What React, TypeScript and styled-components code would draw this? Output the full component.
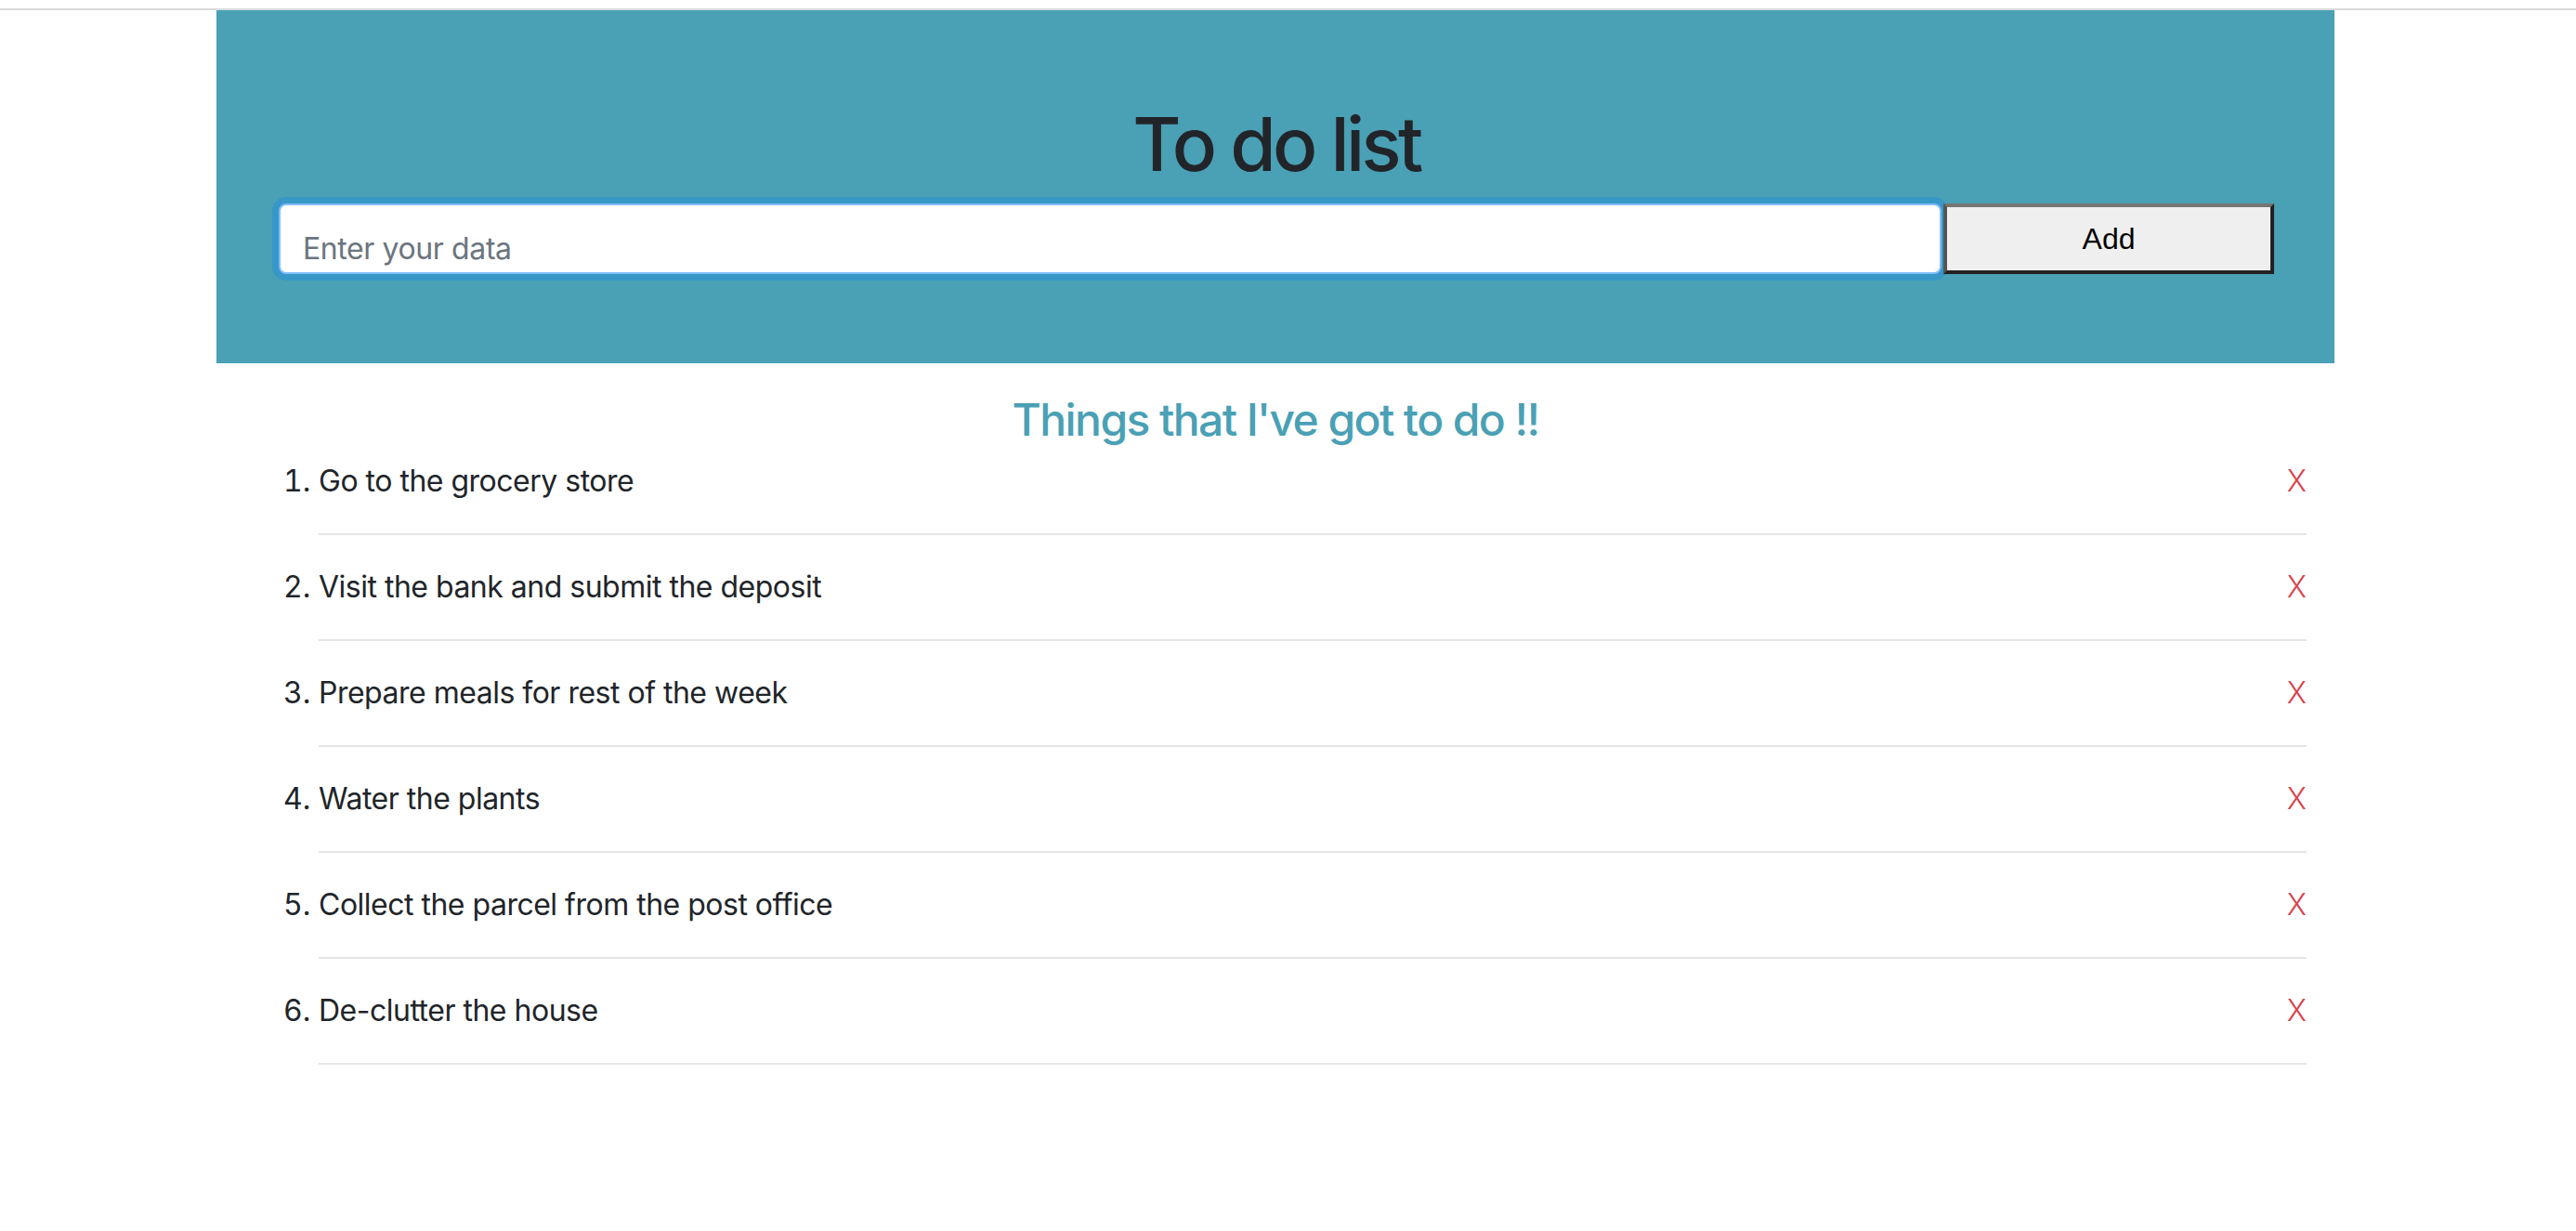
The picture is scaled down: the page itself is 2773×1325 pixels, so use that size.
import React from "react";
import styled, { createGlobalStyle } from "styled-components";

const GlobalStyle = createGlobalStyle`
  html, body {
    margin: 0;
    padding: 0;
    background: #ffffff;
  }
  body {
    font-family: Inter, "Noto Sans", "Liberation Sans", sans-serif;
    color: #212529;
  }
`;

const Page = styled.div`
  padding-top: 9px;
  padding-right: 27px;
`;

const TopRule = styled.div`
  height: 2px;
  background: #dadadd;
  margin-right: -27px;
`;

const Container = styled.div`
  width: 2280px;
  margin: 0 auto;
`;

const Banner = styled.header`
  background: #4aa0b5;
  padding: 96px 65px 96px 67px;
  display: flex;
  flex-direction: column;
  align-items: stretch;
`;

const Title = styled.h1`
  margin: 0 0 16px;
  font-size: 80px;
  line-height: 96px;
  font-weight: 500;
  text-align: center;
  color: #212529;
  letter-spacing: -3.6px;
`;

const Form = styled.form`
  display: flex;
  align-items: stretch;
  gap: 2px;
  margin: 0;
`;

const TextInput = styled.input`
  flex: 1;
  height: 76px;
  box-sizing: border-box;
  padding: 22px 24px 2px;
  font-family: Inter, "Noto Sans", sans-serif;
  font-size: 32px;
  line-height: 48px;
  letter-spacing: -0.4px;
  color: #495057;
  background: #fff;
  border: 2px solid #80bdff;
  border-radius: 8px;
  box-shadow: 0 0 0 7px rgba(0, 123, 255, 0.25);
  outline: none;
  &::placeholder {
    color: #6c757d;
  }
`;

const AddButton = styled.button`
  width: 356px;
  height: 76px;
  box-sizing: border-box;
  background: #efefef;
  color: #000;
  font-family: "Liberation Sans", Arial, sans-serif;
  font-size: 32px;
  border-style: solid;
  border-width: 4px;
  border-color: #767676 #222222 #222222 #555555;
  padding: 0;
  cursor: pointer;
`;

const ListSection = styled.section`
  padding: 0 30px;
`;

const Subtitle = styled.h3`
  margin: 32px 0 13px;
  font-size: 48px;
  line-height: 58px;
  font-weight: 500;
  text-align: center;
  color: #4aa0b5;
  letter-spacing: -1.6px;
`;

const List = styled.ol`
  margin: 0;
  padding-left: 80px;
`;

const Item = styled.li`
  font-size: 32px;
  line-height: 48px;
  padding-bottom: 32px;
  margin-bottom: 32px;
  border-bottom: 2px solid #e5e5e5;
  &::marker {
    color: #212529;
  }
`;

const ItemRow = styled.div`
  display: flex;
  justify-content: space-between;
  align-items: center;
`;

const ItemText = styled.span`
  color: #212529;
  letter-spacing: -0.5px;
`;

const Remove = styled.span`
  color: #d9434e;
  font-family: Inter, "Noto Sans", sans-serif;
  font-weight: 300;
  font-size: 32px;
  cursor: pointer;
`;

const todos = [
  "Go to the grocery store",
  "Visit the bank and submit the deposit",
  "Prepare meals for rest of the week",
  "Water the plants",
  "Collect the parcel from the post office",
  "De-clutter the house",
];

export default function App() {
  return (
    <>
      <GlobalStyle />
      <Page>
        <TopRule />
        <Container>
          <Banner>
            <Title>To do list</Title>
            <Form onSubmit={(e) => e.preventDefault()}>
              <TextInput placeholder="Enter your data" />
              <AddButton type="submit">Add</AddButton>
            </Form>
          </Banner>
          <ListSection>
            <Subtitle>Things that I've got to do !!</Subtitle>
            <List>
              {todos.map((t) => (
                <Item key={t}>
                  <ItemRow>
                    <ItemText>{t}</ItemText>
                    <Remove>X</Remove>
                  </ItemRow>
                </Item>
              ))}
            </List>
          </ListSection>
        </Container>
      </Page>
    </>
  );
}
